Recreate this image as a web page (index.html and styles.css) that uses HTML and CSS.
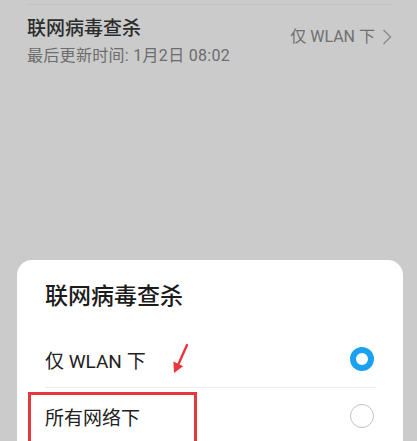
FILE: index.html
```html
<!DOCTYPE html>
<html lang="zh">
<head>
<meta charset="utf-8">
<link rel="stylesheet" href="styles.css">
</head>
<body>
<div class="top-line"></div>
<div class="header">
  <div class="header-text">
    <div class="h-title">联网病毒查杀</div>
    <div class="h-sub">最后更新时间: 1月2日 08:02</div>
  </div>
  <div class="h-right">
    <span>仅 WLAN 下</span>
    <svg class="chev" width="10" height="16" viewBox="0 0 10 16"><polyline points="1.5,1 8.5,8 1.5,15" fill="none" stroke="#8c8c8c" stroke-width="1.4"/></svg>
  </div>
</div>
<div class="card">
  <div class="c-title">联网病毒查杀</div>
  <div class="option">
    <span>仅 WLAN 下</span>
    <span class="radio on"></span>
  </div>
  <div class="divider"></div>
  <div class="option last">
    <span>所有网络下</span>
    <span class="radio"></span>
  </div>
</div>
<div class="mark-box"></div>
<svg class="mark-arrow" width="30" height="40" viewBox="0 0 30 40">
  <line x1="22" y1="5" x2="13.5" y2="24" stroke="#e8383d" stroke-width="2.4" stroke-linecap="round"/>
  <polygon points="9,33 18.2,26.2 8.4,21.6" fill="#e8383d"/>
</svg>
</body>
</html>
```
FILE: styles.css
```css
html, body {
  margin: 0;
  padding: 0;
}
body {
  width: 417px;
  height: 441px;
  overflow: hidden;
  background: #cbcbcb;
  font-family: Roboto, "Noto Sans CJK SC", sans-serif;
  position: relative;
}
.top-line {
  height: 1px;
  margin: 4px 24px 0 27px;
  background: #c3c3c3;
}
.header {
  display: flex;
  align-items: center;
  justify-content: space-between;
  padding: 12px 25px 0 27px;
}
.h-title {
  font-size: 19px;
  line-height: 24px;
  font-weight: 500;
  color: #2c2c2c;
}
.h-sub {
  margin-top: 5px;
  font-size: 16px;
  line-height: 20px;
  letter-spacing: 0.3px;
  color: #6c6c6c;
}
.h-right {
  display: flex;
  align-items: center;
  gap: 7px;
  font-size: 16px;
  line-height: 20px;
  color: #707070;
  margin-top: -9px;
}
.chev {
  display: block;
}
.card {
  margin: 194px 14px 0 17px;
  background: #fff;
  border-radius: 15px 15px 0 0;
  padding: 22px 27px 0 28px;
}
.c-title {
  font-size: 23px;
  line-height: 30px;
  font-weight: 500;
  color: #1c1c1c;
  margin-bottom: 19px;
}
.option {
  height: 56px;
  display: flex;
  align-items: center;
  justify-content: space-between;
  font-size: 19px;
  color: #222;
}
.option.last {
  height: 50px;
  padding-top: 3px;
}
.divider {
  height: 1px;
  background: #ececec;
}
.radio {
  box-sizing: border-box;
  width: 24px;
  height: 24px;
  border-radius: 50%;
  border: 1.5px solid #c2c2c2;
  margin-right: 2px;
}
.radio.on {
  border: 6px solid #1aa2f1;
}
.mark-box {
  position: absolute;
  left: 28px;
  top: 392px;
  width: 163px;
  height: 49px;
  border: 3px solid #e3383d;
  border-bottom: none;
}
.mark-arrow {
  position: absolute;
  left: 165px;
  top: 340px;
}
```
